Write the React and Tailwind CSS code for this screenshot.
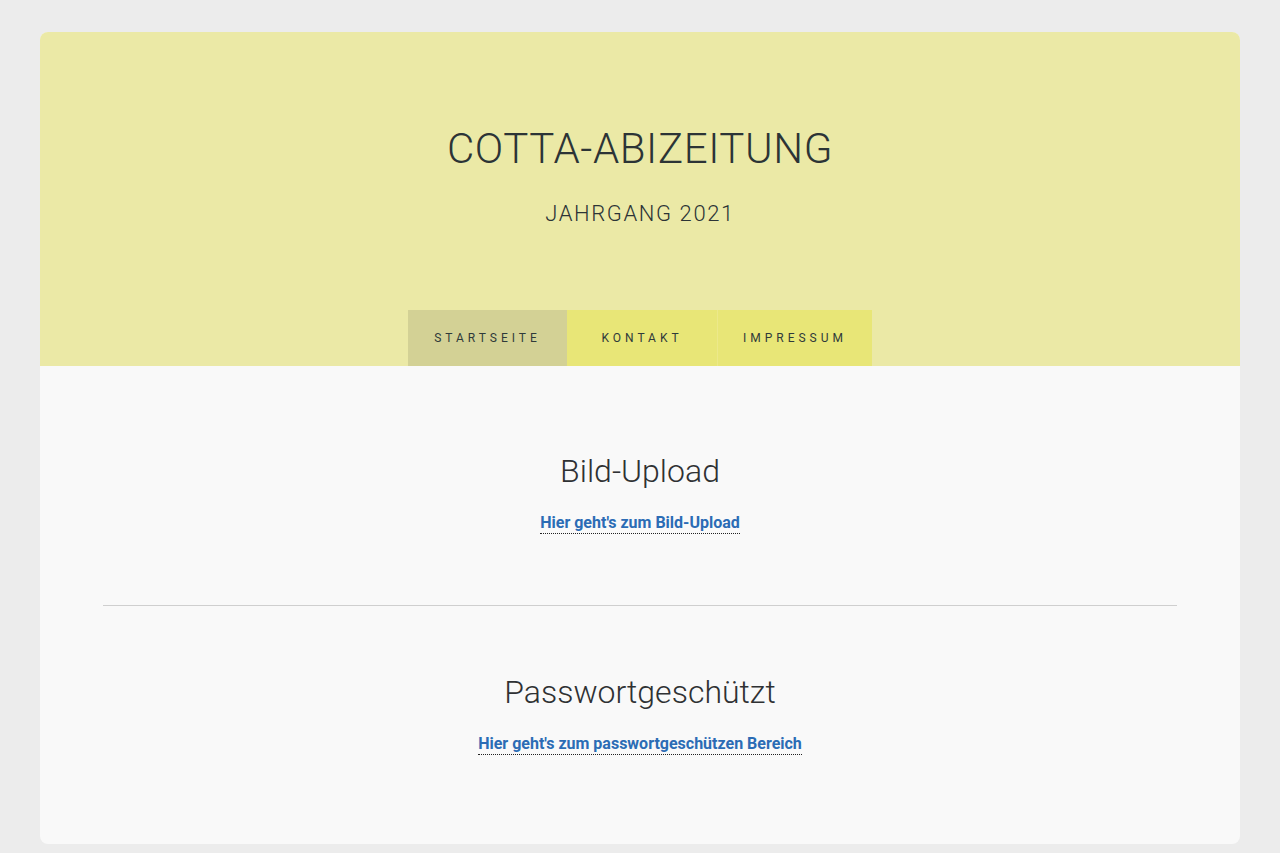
import React from "react";

const navItems = [
  { label: "Startseite", active: true, w: "w-[159px]" },
  { label: "Kontakt", active: false, w: "w-[150px]" },
  { label: "Impressum", active: false, w: "w-[155px]" },
];

const Section = ({ title, link }) => (
  <section className="flex flex-col items-center">
    <h2 className="text-[32px] font-light leading-[40px] text-[#2f3133]">{title}</h2>
    <a
      href="#"
      className="mt-[22px] text-[16px] font-bold leading-[20px] text-[#2b6cb5] border-b border-dotted border-[#222]"
    >
      {link}
    </a>
  </section>
);

export default function App() {
  return (
    <div className="min-h-screen bg-[#ececec] px-[40px] pt-[32px] pb-[10px] font-['Roboto',sans-serif]">
      <div className="rounded-[8px] overflow-hidden bg-[#f9f9f9]">
        {/* Header */}
        <header className="bg-[#ebe9a6] flex flex-col items-center">
          <h1 className="mt-[95px] text-[42px] font-light leading-[44px] tracking-[0.6px] text-[#2c3436]">
            COTTA-ABIZEITUNG
          </h1>
          <p className="mt-[30px] text-[22px] font-light leading-[26px] tracking-[1.6px] text-[#2c3436]">
            JAHRGANG 2021
          </p>
          <nav className="mt-[83px] flex">
            {navItems.map((item, i) => (
              <a
                key={item.label}
                href="#"
                className={`${item.w} h-[56px] flex items-center justify-center text-[12px] uppercase tracking-[4px] text-[#2f3a3a] ${
                  item.active ? "bg-[#d3d195]" : "bg-[#e8e677]"
                } ${i === 2 ? "border-l border-[#ece98a]" : ""}`}
              >
                {item.label}
              </a>
            ))}
          </nav>
        </header>

        {/* Content */}
        <main className="flex flex-col">
          <div className="pt-[85px] pb-[71px]">
            <Section title="Bild-Upload" link="Hier geht's zum Bild-Upload" />
          </div>
          <div className="mx-[63px] h-px bg-[#cfcfcf]" />
          <div className="pt-[66px] pb-[89px]">
            <Section title="Passwortgeschützt" link="Hier geht's zum passwortgeschützen Bereich" />
          </div>
        </main>
      </div>
    </div>
  );
}
